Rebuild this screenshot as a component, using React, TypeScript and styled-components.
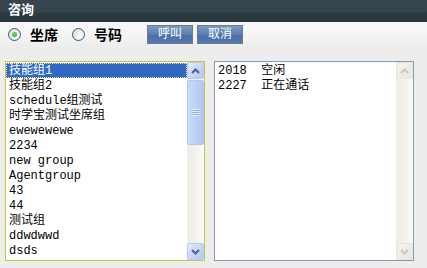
import React from "react";
import styled, { createGlobalStyle } from "styled-components";

const MONO = `"Liberation Mono", "DejaVu Sans Mono", "Noto Sans CJK SC", monospace`;
const SANS = `"Liberation Sans", "Noto Sans CJK SC", sans-serif`;

const groups = [
  "技能组1",
  "技能组2",
  "schedule组测试",
  "时学宝测试坐席组",
  "ewewewewe",
  "2234",
  "new group",
  "Agentgroup",
  "43",
  "44",
  "测试组",
  "ddwdwwd",
  "dsds",
];

const agents = [
  { id: "2018", state: "空闲" },
  { id: "2227", state: "正在通话" },
];

const GlobalStyle = createGlobalStyle`
  html, body {
    margin: 0;
    padding: 0;
    background: #ededed;
    font-family: ${SANS};
  }
`;

const Page = styled.div`
  width: 427px;
  height: 268px;
  background: #ededed;
  overflow: hidden;
`;

const TitleBar = styled.div`
  height: 22px;
  box-sizing: border-box;
  padding: 2px 0 0 8px;
  background: linear-gradient(#37464e 0, #36444c 12px, #2b3941 13px, #2a373f 100%);
  color: #fff;
  font-weight: bold;
  font-size: 13px;
  line-height: 15px;
`;

const Toolbar = styled.div`
  height: 24px;
  display: flex;
  align-items: center;
  padding-left: 8px;
  background: linear-gradient(#f8f8f8, #f4f4f4 60%, #ededed);
`;

const RadioLabel = styled.label`
  display: flex;
  align-items: center;
  gap: 9px;
  margin-right: 14px;
  font-size: 14px;
  font-weight: bold;
  color: #000;
`;

const RadioDot = styled.span<{ $checked?: boolean }>`
  width: 11px;
  height: 11px;
  border-radius: 50%;
  border: 1px solid #2c5a86;
  background: radial-gradient(circle at 65% 65%, #ffffff 0, #e8e8e2 55%, #cfcfc8 100%);
  display: flex;
  align-items: center;
  justify-content: center;

  &::after {
    content: "";
    width: 5px;
    height: 5px;
    border-radius: 50%;
    background: ${(p) => (p.$checked ? "radial-gradient(circle at 40% 40%, #7ee07e, #1e9a1e)" : "transparent")};
  }
`;

const Buttons = styled.div`
  display: flex;
  gap: 4px;
  margin-left: 11px;
`;

const Button = styled.button`
  width: 46px;
  height: 19px;
  padding: 0;
  border: 1px solid #6f7a86;
  background: linear-gradient(#7b9ac4, #5a7db2 50%, #4b70a8 51%, #5378b0);
  color: #fff;
  font-family: ${SANS};
  font-size: 12px;
  line-height: 17px;
`;

const Lists = styled.div`
  display: flex;
  gap: 9px;
  padding: 15px 0 0 5px;
`;

const ListBox = styled.div<{ $focused?: boolean }>`
  width: 200px;
  height: 200px;
  box-sizing: border-box;
  border: 1px solid ${(p) => (p.$focused ? "#c9c83a" : "#7f9db9")};
  background: #fff;
  display: flex;
`;

const Items = styled.div`
  flex: 1;
  padding-top: 1px;
  overflow: hidden;
`;

const Item = styled.div<{ $selected?: boolean }>`
  height: 15px;
  line-height: 16px;
  padding-left: 3px;
  box-sizing: border-box;
  font-family: ${MONO};
  font-size: 12px;
  white-space: pre;
  color: ${(p) => (p.$selected ? "#fff" : "#000")};
  background: ${(p) => (p.$selected ? "#316ac5" : "transparent")};
  outline: ${(p) => (p.$selected ? "1px dotted #f0e8a0" : "none")};
  outline-offset: -1px;
`;

const ScrollBar = styled.div`
  width: 17px;
  display: flex;
  flex-direction: column;
  background: linear-gradient(90deg, #eeede5, #f3f1ea 50%, #fcfcf9);
`;

const ScrollButton = styled.div<{ $disabled?: boolean }>`
  width: 17px;
  height: 17px;
  box-sizing: border-box;
  border: 1px solid ${(p) => (p.$disabled ? "#e8e6dc" : "#b7c9ef")};
  border-radius: 2px;
  background: ${(p) =>
    p.$disabled
      ? "linear-gradient(135deg, #f4f3ee, #e9e7de)"
      : "linear-gradient(135deg, #e4ecfd, #c3d3fb 60%, #b4c7f5)"};
  display: flex;
  align-items: center;
  justify-content: center;
`;

const Track = styled.div`
  flex: 1;
  display: flex;
  flex-direction: column;
`;

const Thumb = styled.div`
  margin-top: 1px;
  height: 65px;
  box-sizing: border-box;
  border: 1px solid #b4c6f0;
  border-radius: 2px;
  background: linear-gradient(90deg, #c9d8fc, #bed0fb 50%, #b3c6f5);
  display: flex;
  align-items: center;
  justify-content: center;
`;

const Grip = styled.div`
  width: 7px;
  height: 7px;
  background: repeating-linear-gradient(#eef3ff 0 1px, #8fa9e6 1px 2px);
`;

const Spacer = styled.div`
  flex: 1;
`;

function Arrow({ up, color }: { up?: boolean; color: string }) {
  return (
    <svg width="9" height="6" viewBox="0 0 9 6">
      <polyline
        points={up ? "1,5 4.5,1.5 8,5" : "1,1 4.5,4.5 8,1"}
        fill="none"
        stroke={color}
        strokeWidth="2"
      />
    </svg>
  );
}

export default function App() {
  return (
    <Page>
      <GlobalStyle />
      <TitleBar>咨询</TitleBar>
      <Toolbar>
        <RadioLabel>
          <RadioDot $checked />
          坐席
        </RadioLabel>
        <RadioLabel>
          <RadioDot />
          号码
        </RadioLabel>
        <Buttons>
          <Button>呼叫</Button>
          <Button>取消</Button>
        </Buttons>
      </Toolbar>
      <Lists>
        <ListBox $focused>
          <Items>
            {groups.map((g, i) => (
              <Item key={g} $selected={i === 0}>
                {g}
              </Item>
            ))}
          </Items>
          <ScrollBar>
            <ScrollButton>
              <Arrow up color="#4d6185" />
            </ScrollButton>
            <Track>
              <Thumb>
                <Grip />
              </Thumb>
              <Spacer />
            </Track>
            <ScrollButton>
              <Arrow color="#4d6185" />
            </ScrollButton>
          </ScrollBar>
        </ListBox>
        <ListBox>
          <Items>
            {agents.map((a) => (
              <Item key={a.id}>{`${a.id}  ${a.state}`}</Item>
            ))}
          </Items>
          <ScrollBar>
            <ScrollButton $disabled>
              <Arrow up color="#c9c7ba" />
            </ScrollButton>
            <Spacer />
            <ScrollButton $disabled>
              <Arrow color="#c9c7ba" />
            </ScrollButton>
          </ScrollBar>
        </ListBox>
      </Lists>
    </Page>
  );
}
